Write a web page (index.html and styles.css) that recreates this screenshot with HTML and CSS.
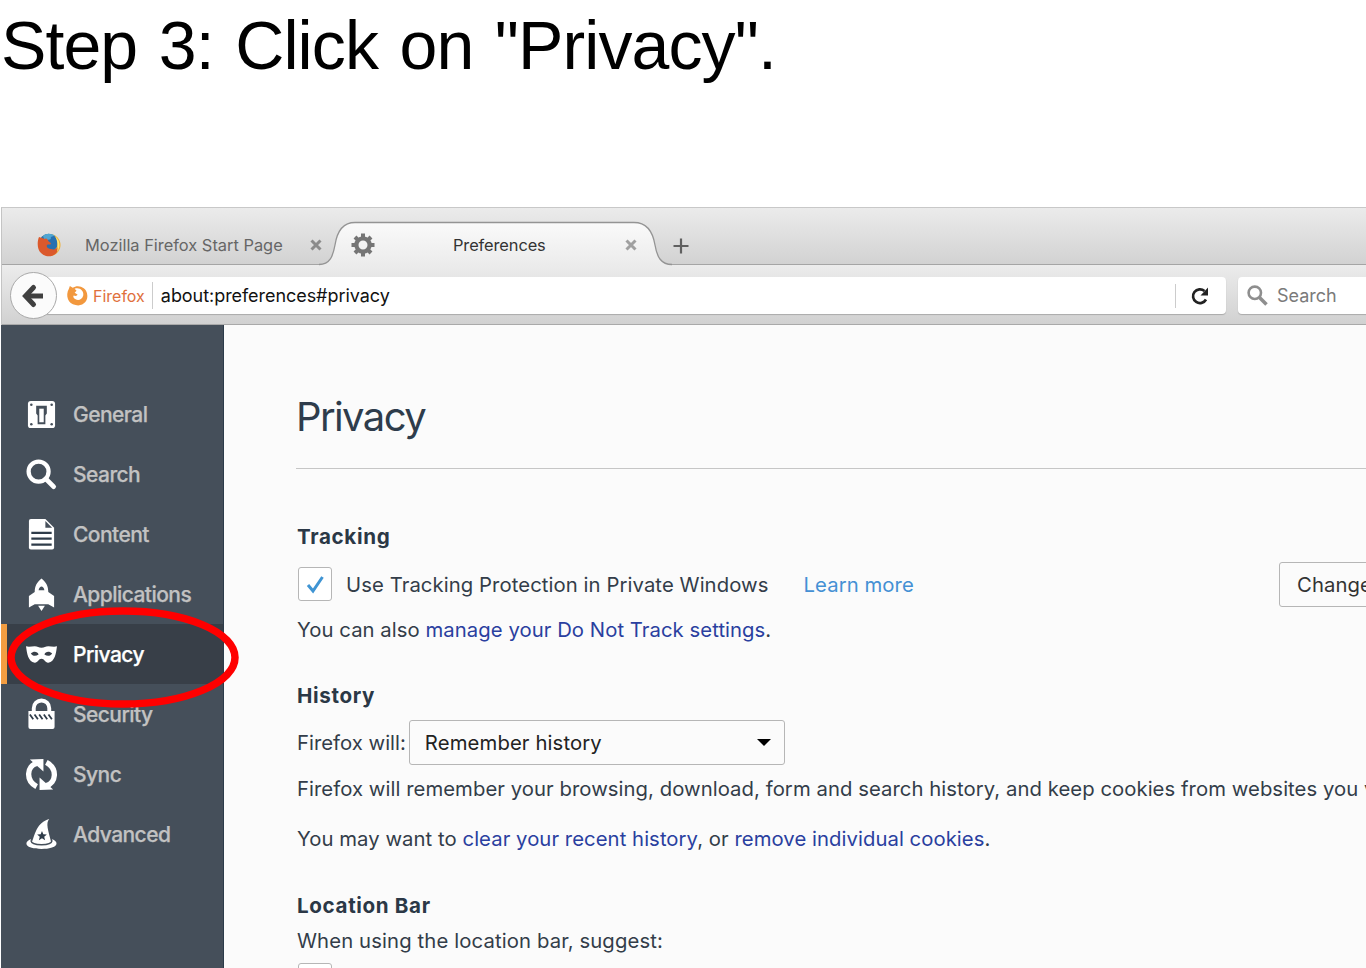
FILE: index.html
```html
<!DOCTYPE html>
<html lang="en">
<head>
<meta charset="utf-8">
<title>Step 3</title>
<link rel="stylesheet" href="styles.css">
</head>
<body>
<h1 class="step">Step 3: Click on "Privacy".</h1>
<div class="window">
  <div class="tabs">
    <div class="tab">
      <svg class="fox" viewBox="0 0 24 24">
        <circle cx="12.500" cy="12" r="11" fill="#efb038"/>
        <circle cx="11.500" cy="10" r="9.200" fill="#2870b0"/>
        <path d="M6 3c3-3 9-3 12 0-3 0-5 1-4 3-2 1-4 0-6 2z" fill="#4fa6d3"/>
        <path d="M2 4c-2 5-2 12 2 16 5 5 13 4 16-1 1-2 2-4 2-6-2 3-5 4-8 3-3 0-5-2-4-4 1-1 3 0 4-1 0-2-3-2-3-4-1-1-2-2-3-1-2-1-4-1-6-2z" fill="#db592c"/>
        <path d="M18 3c5 4 6 11 2 16 1-4 1-11-2-16z" fill="#fbe47a"/>
      </svg>
      <span class="title">Mozilla Firefox Start Page</span>
      <svg class="close" viewBox="0 0 12 12"><path d="M1.500 1.500l9 9M10.500 1.500l-9 9" stroke="#8b8b8b" stroke-width="3"/></svg>
    </div>
    <div class="tab active">
      <svg class="shape" viewBox="0 0 354 45">
        <defs><linearGradient id="tabfill" x1="0" y1="0" x2="0" y2="1"><stop offset="0" stop-color="#fafafa"/><stop offset="1" stop-color="#ebebeb"/></linearGradient></defs>
        <path d="M0 42.500C11 42.500 14 34 16 23C18 10 23 .5 36 .5H315C329 .5 334 11 336 23C338 35 342 42.500 353 42.500V45H0Z" fill="url(#tabfill)"/>
        <path d="M0 42.500C11 42.500 14 34 16 23C18 10 23 .5 36 .5H315C329 .5 334 11 336 23C338 35 342 42.500 353 42.500" fill="none" stroke="#949494" stroke-width="1.300"/>
      </svg>
      <svg class="gear" viewBox="0 0 24 24"><g stroke="#757575" stroke-width="4"><path d="M12 .5v5M12 18.500v5M.5 12h5M18.500 12h5M4 4l4 4M16 16l4 4M20 4l-4 4M8 16l-4 4"/></g><circle cx="12" cy="12" r="6.600" fill="none" stroke="#757575" stroke-width="4.200"/></svg>
      <span class="title">Preferences</span>
      <svg class="close" viewBox="0 0 12 12"><path d="M1.500 1.500l9 9M10.500 1.500l-9 9" stroke="#a0a0a0" stroke-width="3"/></svg>
    </div>
    <svg class="plus" viewBox="0 0 16 16"><path d="M8 .5v15M.5 8h15" stroke="#606060" stroke-width="2.200"/></svg>
  </div>
  <div class="toolbar">
    <div class="back"><svg viewBox="0 0 22 24"><path d="M11.500 3.500L3.500 12l8 8.500" fill="none" stroke="#404040" stroke-width="5" stroke-linecap="round"/><path d="M4 12h17" stroke="#404040" stroke-width="5"/></svg></div>
    <div class="url">
      <svg class="brand" viewBox="0 0 22 22"><path d="M2 4L3 1l3 2C11-1 20 2 21 9c2 8-5 14-12 12C1 20-2 11 2 4z" fill="#f2983e"/><path d="M8 4c5-2 10 2 9 7-1 4-5 6-8 4-2-1-3-3-2-4 2 1 4 0 4-1L8 8l2-2z" fill="#fff"/></svg>
      <span class="identity">Firefox</span>
      <i class="sep"></i>
      <span class="address">about:preferences#privacy</span>
      <i class="sep end"></i>
      <svg class="reload" viewBox="0 0 18 18"><path d="M15 12.500A6.900 6.900 0 1 1 13.500 4" fill="none" stroke="#222" stroke-width="2.700"/><path d="M17 .5V8.500H9.500Z" fill="#222"/></svg>
    </div>
    <div class="find">
      <svg viewBox="0 0 21 21"><circle cx="7.800" cy="7.800" r="6.200" fill="none" stroke="#8e8e8e" stroke-width="2.600"/><path d="M12.500 12.500l7 7" stroke="#8e8e8e" stroke-width="3.600"/></svg>
      <span>Search</span>
    </div>
  </div>
  <div class="body">
    <nav class="side">
      <a class="item"><svg viewBox="0 0 32 32"><rect x="2" y="2" width="28" height="28" rx="3" fill="#fff"/><path d="M10.500 7h11v8l-1.500 2v9h-8v-9l-1.500-2z" fill="#454f5a"/><rect x="13.700" y="10" width="4.600" height="14" fill="#fff"/><g fill="#454f5a"><circle cx="5.500" cy="6" r="1.300"/><circle cx="26.500" cy="6" r="1.300"/><circle cx="5.500" cy="26" r="1.300"/><circle cx="26.500" cy="26" r="1.300"/></g></svg>General</a>
      <a class="item"><svg viewBox="0 0 32 32"><circle cx="13" cy="13" r="10.300" fill="none" stroke="#fff" stroke-width="4.400"/><path d="M20.500 20.500l8 8" stroke="#fff" stroke-width="5" stroke-linecap="round"/></svg>Search</a>
      <a class="item"><svg viewBox="0 0 32 32"><path d="M5 0H20l9 9v20.500a2 2 0 0 1-2 2H5a2 2 0 0 1-2-2V2a2 2 0 0 1 2-2z" fill="#fff"/><path d="M20 2v7h7" fill="#454f5a"/><path d="M5.500 14.300h21M5.500 20.300h21M5.500 26.500h21" stroke="#2f3c4a" stroke-width="2.200"/></svg>Content</a>
      <a class="item"><svg viewBox="0 0 32 32"><path d="M16-.5c5 4 7 8 7 14l6 4v12l-6-3.500H9l-6 3.500v-12l6-4C9 7.500 11 3.500 16-.5z" fill="#fff"/><path d="M13 11.500c1-5 5-5 6 0z" fill="#454f5a"/><path d="M12.500 27.500h7L16 33z" fill="#fff"/></svg>Applications</a>
      <a class="item on"><svg viewBox="0 0 32 32"><path d="M0 7.500c3 1 6 0 9 0 3 .3 4 1.500 7 1.500S20 7.800 23 7.500c3 0 6 1 9 0-1 7-2 16-9 17-3 .3-4-4-7-4s-4 4.300-7 4C2 23.500 1 14.500 0 7.500z" fill="#fff"/><path d="M5 15c3-3 7-2 8 1-3 2-6 2-8-1zM27 15c-3-3-7-2-8 1 3 2 6 2 8-1z" fill="#383f48"/></svg>Privacy</a>
      <a class="item"><svg viewBox="0 0 32 32"><path d="M8 14V9.500a8 8 0 0 1 16 0V14" fill="none" stroke="#fff" stroke-width="4"/><path d="M2.500 12.500h27V29a2 2 0 0 1-2 2h-23a2 2 0 0 1-2-2z" fill="#fff"/><path d="M4 16l3.500 5M8.800 16l3.500 5M13.600 16l3.500 5M18.400 16l3.500 5M23.200 16l3.500 5" stroke="#2f3c4a" stroke-width="1.800"/></svg>Security</a>
      <a class="item"><svg viewBox="0 0 32 32"><path d="M11 28.500C-1 22 1 7 11 4.500" fill="none" stroke="#fff" stroke-width="5.500"/><path d="M4 .5L18 0V13z" fill="#fff"/><path d="M21 3.500C33 10 31 25 21 27.500" fill="none" stroke="#fff" stroke-width="5.500"/><path d="M28 31.500L14 32V19z" fill="#fff"/></svg>Sync</a>
      <a class="item"><svg viewBox="0 0 32 32"><path d="M6 24C10 14 11 4 24 0c-4 4-1 12 2 24-5 4-15 4-20 0z" fill="#fff"/><path d="M5 21C-3 24-1 31 16 31s19-7 11-10c1 7-22 7-22 0z" fill="#fff"/><path d="M5 22c1 6 21 6 22 0" fill="none" stroke="#454f5a" stroke-width="1.500"/><path d="M16.500 12.500l1.400 3.200 3.600.2-2.700 2.400.9 3.600-3.200-2-3.200 2 .9-3.600-2.700-2.400 3.600-.2z" fill="#2f3c4a"/></svg>Advanced</a>
      <svg class="ring" viewBox="0 0 234 104"><ellipse cx="117" cy="51.500" rx="112" ry="46.500" fill="none" stroke="#f00" stroke-width="7.500"/></svg>
    </nav>
    <main class="main">
      <h2>Privacy</h2>
      <h3 class="h-track">Tracking</h3>
      <div class="row track">
        <i class="check"><svg viewBox="0 0 20 20"><path d="M2 10l5 6L16.500 2" fill="none" stroke="#3f94d3" stroke-width="3"/></svg></i>
        <span class="label">Use Tracking Protection in Private Windows</span>
        <a class="learn">Learn more</a>
        <div class="change">Change</div>
      </div>
      <p class="dnt">You can also <a>manage your Do Not Track settings</a>.</p>
      <h3 class="h-hist">History</h3>
      <div class="row hist"><span>Firefox will:</span><div class="select"><span>Remember history</span><i class="arrow"></i></div></div>
      <p class="info">Firefox will remember your browsing, download, form and search history, and keep cookies from websites you visit.</p>
      <p class="clear">You may want to <a>clear your recent history</a>, or <a>remove individual cookies</a>.</p>
      <h3 class="h-loc">Location Bar</h3>
      <p class="sug">When using the location bar, suggest:</p>
      <i class="check last"></i>
    </main>
  </div>
</div>
</body>
</html>
```
FILE: styles.css
```css
* { box-sizing: border-box; }
html, body { margin: 0; height: 968px; overflow: hidden; background: #fff; }
body { font-family: Inter, "Liberation Sans", sans-serif; white-space: nowrap; color: #333d49; }
h1, h2, h3, p { margin: 0; font-weight: 400; }
svg { display: block; flex: none; overflow: visible; }
i { display: block; flex: none; }

.step { height: 207px; padding: 5px 0 0 1px; font: 68px/80px "Liberation Sans", sans-serif; letter-spacing: -.9px; word-spacing: 3.500px; color: #000; }
.window { height: 761px; margin-left: 1px; border-top: 1px solid #c8c8c8; border-left: 1px solid #c4c4c4; }

/* Tab strip */
.tabs { display: flex; height: 57px; background: linear-gradient(#ebebeb, #d2d2d2); border-bottom: 1px solid #a5a5a5; font-size: 16.400px; }
.tab { display: flex; align-items: center; width: 319px; padding: 17px 0 0 35px; color: #666; }
.fox { width: 24px; height: 24px; margin-right: 24px; }
.close { width: 12px; height: 12px; margin: 0 -1px 0 auto; }
.active { position: relative; width: 352px; padding: 17px 34px 0 30px; color: #333; }
.active .close { margin-right: 2px; }
.shape { position: absolute; left: -2px; top: 14px; width: 354px; height: 45px; }
.gear, .active .title, .active .close { position: relative; }
.active .title { letter-spacing: -.1px; }
.gear { width: 24px; height: 24px; margin-right: 78px; }
.plus { width: 16px; height: 16px; margin-top: 30px; }

/* Navigation toolbar */
.toolbar { display: flex; align-items: center; height: 60px; padding-top: 2px; background: linear-gradient(#ececec, #d1d1d1); border-bottom: 1px solid #a9a9a9; }
.back { position: relative; z-index: 1; display: grid; place-items: center; flex: none; width: 47px; height: 47px; margin-left: 8px; background: #fbfbfb; border: 1px solid #a9a9a9; border-radius: 50%; }
.back svg { width: 22px; height: 24px; margin-right: 2px; }
.url { display: flex; align-items: center; flex: none; width: 1182px; height: 37px; margin-left: -13px; padding-left: 23px; background: #fff; border-radius: 4px; box-shadow: 0 1px 1px #aaa; }
.brand { width: 21px; height: 21px; margin-right: 5px; }
.identity { color: #e0703c; font-size: 16px; }
.sep { width: 1px; height: 27px; margin: 0 8px 0 7px; background: #ccc; }
.sep.end { height: 24px; margin: 0 15px 0 auto; }
.address { color: #111; font-size: 18px; letter-spacing: -.05px; }
.reload { width: 18px; height: 18px; margin-right: 17px; }
.find { display: flex; align-items: center; flex: none; width: 150px; height: 37px; margin-left: 12px; padding-left: 9px; background: #fff; border-radius: 4px; box-shadow: 0 1px 1px #aaa; color: #7a7a7a; font-size: 18px; }
.find svg { width: 21px; height: 21px; margin-right: 9px; }

/* Category sidebar */
.body { display: flex; height: 643px; margin-left: -1px; }
.side { position: relative; width: 223px; padding-top: 59px; background: #454f5a; border-right: 1px solid #2c3b49; flex: none; }
.item { display: flex; align-items: center; height: 60px; padding-left: 25px; color: #c2c2c2; font-size: 21px; font-weight: 500; letter-spacing: -.55px; -webkit-text-stroke: .25px; }
.item svg { width: 31px; height: 31px; margin-right: 16px; }
.item.on { background: #383f48; color: #fff; box-shadow: inset 6px 0 #f39d41; }
.ring { position: absolute; left: 5px; top: 281px; width: 234px; height: 104px; z-index: 2; }

/* Preference pane */
.main { width: 1142px; padding-left: 73px; background: #fbfbfb; overflow: hidden; font-size: 20.300px; letter-spacing: .08px; flex: none; }
h2 { height: 144px; margin-left: -1px; padding-top: 64px; font-size: 40px; line-height: 56px; letter-spacing: -1.600px; border-bottom: 1px solid #c6c6c6; color: #2e3c4b; }
h3 { font-size: 20.600px; font-weight: 700; line-height: 30px; letter-spacing: .65px; color: #2b3846; }
p { line-height: 30px; letter-spacing: .055px; }
.row { display: flex; align-items: center; }
.h-track { padding-top: 53px; }
.track { height: 46px; margin-top: 9px; }
.check { width: 34px; height: 34px; margin-left: 1px; padding: 7px; border: 1px solid #b6b6b6; border-radius: 3px; background: #fff; }
.check svg { width: 20px; height: 20px; }
.label { margin-left: 14px; }
.learn { margin-left: 35px; color: #4490d4; }
.change { width: 220px; height: 45px; margin: 0 -133px 0 auto; padding-left: 17px; line-height: 44px; border: 1px solid #b6b6b6; border-radius: 3px; color: #333; }
.dnt { margin-top: 8px; }
.h-hist { padding-top: 36px; }
.hist { height: 45px; margin-top: 9px; letter-spacing: .02px; }
.select { display: flex; align-items: center; justify-content: space-between; width: 376px; height: 45px; margin-left: 3px; padding: 0 13px 0 15px; border: 1px solid #b6b6b6; border-radius: 3px; color: #222; letter-spacing: .12px; }
.arrow { border: 7px solid transparent; border-top-color: #000; border-bottom: 0; }
.info { margin-top: 9px; }
.clear { margin-top: 20px; }
.h-loc { padding-top: 37px; }
.sug { margin-top: 5px; letter-spacing: .12px; }
.last { margin-top: 7px; }
p a { color: #2a3f9f; }
```
